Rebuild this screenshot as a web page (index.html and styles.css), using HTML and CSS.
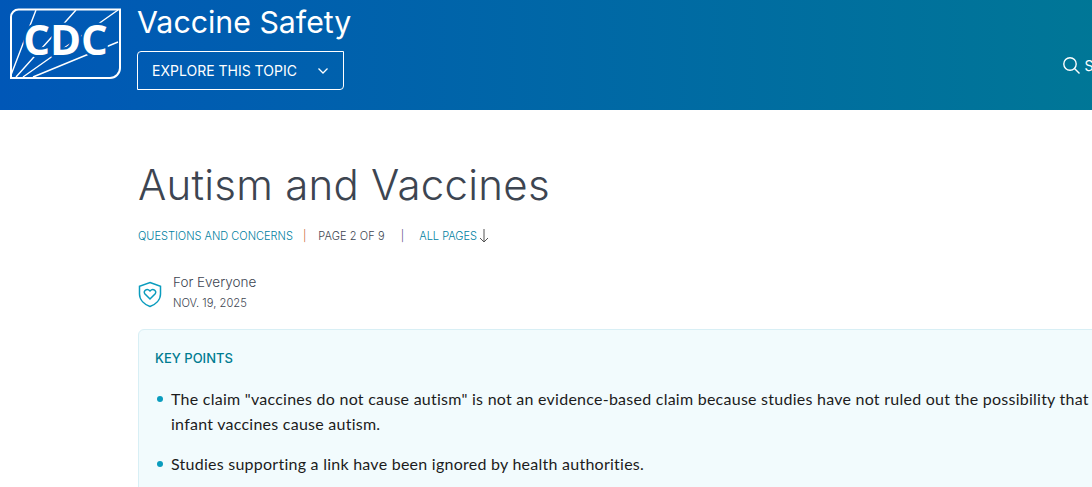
FILE: index.html
```html
<!DOCTYPE html>
<html lang="en">
<head>
  <meta charset="UTF-8" />
  <title>Autism and Vaccines</title>
  <link rel="stylesheet" href="styles.css">
</head>
<body>
  <div class="page">
    <header class="site-header">
      <a class="logo" href="#" aria-label="CDC">
        <svg width="112" height="71" viewBox="0 0 112 71">
          <path class="logo-box" d="M9.5 1.5H111V60A10 10 0 0 1 101 70H2V9A7.5 7.5 0 0 1 9.5 1.5Z"/>
          <path class="logo-rays" d="M2 67L27 2M7 69L67 2M14 69L109 2M24 69L109 34"/>
          <text class="logo-text" x="56.5" y="47" text-anchor="middle">CDC</text>
        </svg>
      </a>
      <div class="site-title">
        <div class="topic-name">Vaccine Safety</div>
        <button class="explore-btn">
          <span>EXPLORE THIS TOPIC</span>
          <svg width="12" height="8" viewBox="0 0 12 8"><path d="M1.5 1.5L6 6L10.5 1.5"/></svg>
        </button>
      </div>
      <div class="search">
        <svg width="19" height="19" viewBox="0 0 19 19"><circle cx="8" cy="8" r="6.2"/><path d="M12.5 12.5L17.5 17.5"/></svg>
        <span>Search</span>
      </div>
    </header>

    <main class="content">
      <h1>Autism and Vaccines</h1>
      <div class="crumbs">
        <a href="#">QUESTIONS AND CONCERNS</a>
        <span class="sep sep-orange">|</span>
        <span class="page-count">PAGE 2 OF 9</span>
        <span class="sep sep-purple">|</span>
        <a href="#" class="all-pages">ALL PAGES
          <svg width="10" height="14" viewBox="0 0 10 14"><path d="M5 0V13M1 9L5 13L9 9"/></svg>
        </a>
      </div>

      <div class="audience">
        <svg width="24" height="27" viewBox="0 0 24 27">
          <path d="M12 1.5L22.5 5.2V13C22.5 19 17.5 23.5 12 25.5C6.5 23.5 1.5 19 1.5 13V5.2Z"/>
          <path d="M12 18L6.8 12.8C4.8 10 8.8 6.8 12 10C15.2 6.8 19.2 10 17.2 12.8Z"/>
        </svg>
        <div>
          <div class="audience-name">For Everyone</div>
          <div class="audience-date">NOV. 19, 2025</div>
        </div>
      </div>

      <section class="key-points">
        <h2>KEY POINTS</h2>
        <ul>
          <li>The claim "vaccines do not cause autism" is not an evidence-based claim because studies have not ruled out the possibility that infant vaccines cause autism.</li>
          <li>Studies supporting a link have been ignored by health authorities.</li>
        </ul>
      </section>
    </main>
  </div>
</body>
</html>
```

FILE: styles.css
```css
html, body {
  margin: 0;
  height: 487px;
  overflow: hidden;
  background: #fff;
}

a {
  color: #0081a1;
  text-decoration: none;
}

.page {
  width: 1280px;
}

.site-header {
  display: flex;
  align-items: flex-start;
  height: 110px;
  box-sizing: border-box;
  padding: 8px 0 0 9px;
  background: linear-gradient(90deg, #0057b7, #007c91);
  color: #fff;
  font-family: "Inter", sans-serif;
}

.logo {
  display: block;
  height: 71px;
}

.logo-box {
  fill: none;
  stroke: #fff;
  stroke-width: 2;
}

.logo-rays {
  fill: none;
  stroke: #fff;
  stroke-width: 1.4;
}

.logo-text {
  fill: #fff;
  stroke: #005ab3;
  stroke-width: 5;
  paint-order: stroke;
  font-family: "Open Sans", sans-serif;
  font-weight: 700;
  font-size: 42px;
}

.site-title {
  margin-left: 16px;
}

.topic-name {
  font-size: 30.3px;
  line-height: 28px;
  margin-bottom: 15px;
}

.explore-btn {
  display: flex;
  align-items: center;
  gap: 20px;
  width: 207px;
  height: 39px;
  padding: 0 14px;
  border: 1px solid #fff;
  border-radius: 4px 0 4px 0;
  background: transparent;
  color: #fff;
  font-family: inherit;
  font-size: 14px;
}

.explore-btn svg {
  fill: none;
  stroke: #fff;
  stroke-width: 1.3;
}

.search {
  display: flex;
  align-items: center;
  gap: 3px;
  margin: 48px 0 0 711px;
  font-size: 14px;
}

.search svg {
  fill: none;
  stroke: #fff;
  stroke-width: 1.4;
}

.content {
  padding: 50px 0 0 138px;
  font-family: "Inter", sans-serif;
  color: #3d4551;
}

h1 {
  margin: 0;
  font-size: 42px;
  font-weight: 300;
  line-height: 50px;
  letter-spacing: 0.25px;
}

.crumbs {
  display: flex;
  align-items: center;
  margin-top: 18px;
  font-size: 11px;
  font-weight: 300;
  line-height: 16px;
}

.sep-orange {
  margin: 0 10px;
  color: #c4622d;
}

.sep-purple {
  margin: 0 15px 0 16px;
  color: #4f4680;
}

.page-count {
  margin-left: 2px;
  letter-spacing: 0.1px;
}

.all-pages svg {
  vertical-align: -3px;
  margin-left: -1px;
  fill: none;
  stroke: #555;
}

.audience {
  display: flex;
  align-items: center;
  gap: 11px;
  margin-top: 29px;
}

.audience svg {
  fill: none;
  stroke: #0a9cbe;
  stroke-width: 1.5;
}

.audience-name {
  font-size: 13.5px;
  font-weight: 300;
  line-height: 19px;
}

.audience-date {
  font-size: 11.2px;
  font-weight: 300;
  line-height: 23px;
}

.key-points {
  width: 1000px;
  height: 200px;
  margin-top: 14px;
  padding: 20px 16px;
  box-sizing: border-box;
  border: 1px solid #d8eff5;
  border-radius: 6px;
  background: #f2fbfd;
  font-family: "Lato", sans-serif;
}

.key-points h2 {
  margin: 0;
  font-family: "Inter", sans-serif;
  font-size: 13px;
  font-weight: 500;
  line-height: 17px;
  color: #007c91;
}

.key-points ul {
  margin: 19px 0 0;
  padding: 0 0 0 16px;
  list-style: none;
  color: #1c1c1c;
  font-size: 16px;
  letter-spacing: 0.25px;
  line-height: 25px;
}

.key-points li {
  position: relative;
  margin-bottom: 15px;
}

.key-points li::before {
  content: "";
  position: absolute;
  left: -14px;
  top: 10px;
  width: 6px;
  height: 6px;
  border-radius: 50%;
  background: #0a9cbe;
}
```
